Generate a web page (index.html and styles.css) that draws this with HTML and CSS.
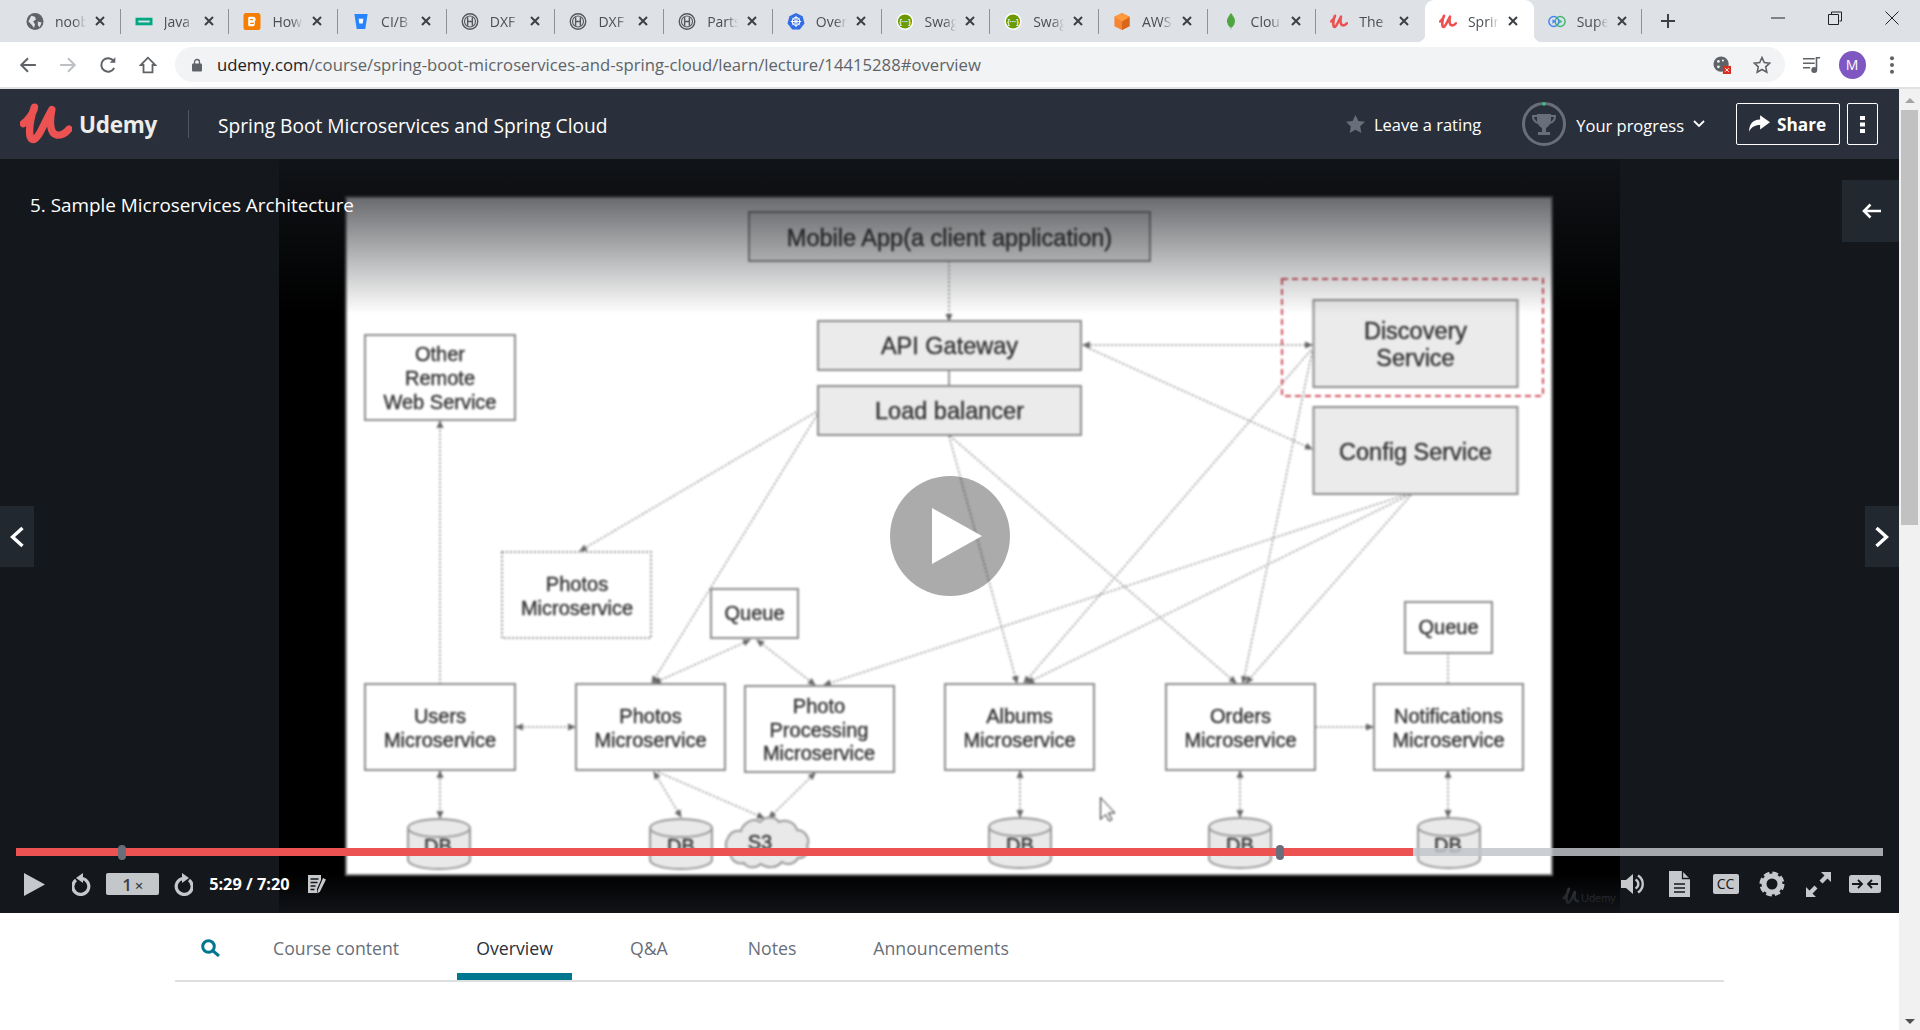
FILE: index.html
```html
<!DOCTYPE html>
<html lang="en">
<head>
    <meta charset="UTF-8">
    <meta name="viewport" content="width=device-width, initial-scale=1.0">
    <title>Spring Boot Microservices and Spring Cloud</title>
    <link rel="stylesheet" href="styles.css">
</head>
<body>

<svg class="icon-defs" aria-hidden="true">
    <defs>
        <symbol id="i-close" viewBox="0 0 12 12"><path d="M2 2l8 8M10 2l-8 8" fill="none" stroke="#3c4043" stroke-width="2"/></symbol>
        <symbol id="i-u" viewBox="30 20 155 130"><path d="M40 84C55 72 72 50 73 35C65 55 55 95 60 122C66 142 82 128 95 100C105 80 115 60 125 42C118 75 118 115 140 118C155 120 168 110 176 100" fill="none" stroke="#ec5252" stroke-width="22" stroke-linecap="round" stroke-linejoin="round"/></symbol>
        <symbol id="i-globe" viewBox="0 0 18 18"><circle cx="9" cy="9" r="9" fill="#5f6368"/><path d="M5 3l4 1 1 3-3 2 2 3-1 4-3-4-3-3zM12 9l4 1-2 5-2-2z" fill="#dee1e6"/></symbol>
        <symbol id="i-hp" viewBox="0 0 18 18"><rect x="0" y="5" width="18" height="8" fill="#01a982"/><rect x="3" y="8" width="12" height="2" fill="#dee1e6"/></symbol>
        <symbol id="i-blogger" viewBox="0 0 18 18"><rect width="18" height="18" rx="3" fill="#f57d00"/><path d="M6 4h4c2 0 3 1 3 4h-1v3c0 2-1 3-3 3H7c-2 0-2-1-2-3V6c0-1 0-2 1-2z" fill="#fff"/><path d="M7 7h3M7 11h4" stroke="#f57d00" stroke-width="1.4"/></symbol>
        <symbol id="i-bucket" viewBox="0 0 18 18"><path d="M2 1h14l-2.5 16h-9z" fill="#2684ff"/><path d="M6.5 6h5l-.7 5H7.200z" fill="#fff"/></symbol>
        <symbol id="i-ring" viewBox="0 0 18 18"><circle cx="9" cy="9" r="8.200" fill="none" stroke="#55585c" stroke-width="1.500"/><circle cx="9" cy="9" r="5.800" fill="none" stroke="#55585c" stroke-width="1.200"/><path d="M6.500 4.500v9M11.500 4.500v9M6.500 9h5" fill="none" stroke="#55585c" stroke-width="1.500"/></symbol>
        <symbol id="i-k8s" viewBox="0 0 18 18"><path d="M9 0l7 3.500 2 7.500-5 6.500H5L0 11l2-7.500z" fill="#326ce5"/><circle cx="9" cy="9" r="4" fill="none" stroke="#fff" stroke-width="1.300"/><path d="M9 3v12M3.500 9h11M5 5l8 8M13 5l-8 8" stroke="#fff"/></symbol>
        <symbol id="i-swagger" viewBox="0 0 18 18"><circle cx="9" cy="9" r="9" fill="#fff"/><circle cx="9" cy="9" r="7.500" fill="#6d9a00"/><text x="9" y="12" text-anchor="middle" class="swagger-text">{···}</text></symbol>
        <symbol id="i-cube" viewBox="0 0 18 18"><path d="M9 0l8 4v10l-8 4-8-4V4z" fill="#f58534"/><path d="M9 9l8-5v10l-8 4z" fill="#d9671b"/><path d="M9 0l8 4-8 5-8-5z" fill="#ff9a3c"/></symbol>
        <symbol id="i-leaf" viewBox="0 0 18 18"><path d="M9 0c3 4 5 7 4 10-.5 3-2.500 5-3.500 5l-.5 3-.5-3C7.500 15 5.500 13 5 10 4 7 6 4 9 0z" fill="#4fa53f"/></symbol>
        <symbol id="i-super" viewBox="0 0 20 18"><circle cx="6.500" cy="9" r="5.500" fill="none" stroke="#4285f4" stroke-width="1.600"/><circle cx="13.500" cy="9" r="5.500" fill="none" stroke="#3dba6e" stroke-width="1.600"/><path d="M5 6.500l4 2.500-4 2.500z" fill="#4285f4"/><path d="M12 6.500l4 2.500-4 2.500z" fill="#3dba6e"/></symbol>
        <marker id="arrow" viewBox="0 0 8 8" refX="7" refY="4" markerWidth="8" markerHeight="8" markerUnits="userSpaceOnUse" orient="auto-start-reverse"><path d="M0 0.500L8 4L0 7.500z" fill="#666"/></marker>
        <symbol id="i-db" viewBox="0 0 64 52" overflow="visible"><path d="M1 10v32c0 5 14 9 31 9s31-4 31-9V10" fill="#e9e9e9" stroke="#999" stroke-width="2"/><ellipse cx="32" cy="10" rx="31" ry="9" fill="#e9e9e9" stroke="#999" stroke-width="2"/></symbol>
    </defs>
</svg>

<div class="tabstrip">
    <div class="tab"><svg class="favicon"><use href="#i-globe"/></svg><span class="tab-title">noob</span><svg class="tab-close"><use href="#i-close"/></svg></div>
    <div class="tab"><svg class="favicon"><use href="#i-hp"/></svg><span class="tab-title">Java</span><svg class="tab-close"><use href="#i-close"/></svg></div>
    <div class="tab"><svg class="favicon"><use href="#i-blogger"/></svg><span class="tab-title">How</span><svg class="tab-close"><use href="#i-close"/></svg></div>
    <div class="tab"><svg class="favicon"><use href="#i-bucket"/></svg><span class="tab-title">CI/B</span><svg class="tab-close"><use href="#i-close"/></svg></div>
    <div class="tab"><svg class="favicon"><use href="#i-ring"/></svg><span class="tab-title">DXF</span><svg class="tab-close"><use href="#i-close"/></svg></div>
    <div class="tab"><svg class="favicon"><use href="#i-ring"/></svg><span class="tab-title">DXF</span><svg class="tab-close"><use href="#i-close"/></svg></div>
    <div class="tab"><svg class="favicon"><use href="#i-ring"/></svg><span class="tab-title">Parts</span><svg class="tab-close"><use href="#i-close"/></svg></div>
    <div class="tab"><svg class="favicon"><use href="#i-k8s"/></svg><span class="tab-title">Over</span><svg class="tab-close"><use href="#i-close"/></svg></div>
    <div class="tab"><svg class="favicon"><use href="#i-swagger"/></svg><span class="tab-title">Swag</span><svg class="tab-close"><use href="#i-close"/></svg></div>
    <div class="tab"><svg class="favicon"><use href="#i-swagger"/></svg><span class="tab-title">Swag</span><svg class="tab-close"><use href="#i-close"/></svg></div>
    <div class="tab"><svg class="favicon"><use href="#i-cube"/></svg><span class="tab-title">AWS</span><svg class="tab-close"><use href="#i-close"/></svg></div>
    <div class="tab"><svg class="favicon"><use href="#i-leaf"/></svg><span class="tab-title">Clou</span><svg class="tab-close"><use href="#i-close"/></svg></div>
    <div class="tab tab-before-active"><svg class="favicon"><use href="#i-u"/></svg><span class="tab-title">The</span><svg class="tab-close"><use href="#i-close"/></svg></div>
    <div class="tab tab-active"><svg class="favicon"><use href="#i-u"/></svg><span class="tab-title">Sprin</span><svg class="tab-close"><use href="#i-close"/></svg></div>
    <div class="tab"><svg class="favicon"><use href="#i-super"/></svg><span class="tab-title">Supe</span><svg class="tab-close"><use href="#i-close"/></svg></div>
    <div class="new-tab"><svg viewBox="0 0 14 14"><path d="M7 0v14M0 7h14" stroke="#3c4043" stroke-width="2"/></svg></div>
    <div class="window-controls">
        <div class="window-btn"><svg viewBox="0 0 14 14"><path d="M0 7h14" stroke="#222" stroke-width="1"/></svg></div>
        <div class="window-btn"><svg viewBox="0 0 14 14"><path d="M3.500 3V1h10v9h-2M.5 3.500h10v10H.5z" fill="none" stroke="#222"/></svg></div>
        <div class="window-btn"><svg viewBox="0 0 14 14"><path d="M.5.5l13 13M13.500.5l-13 13" stroke="#222"/></svg></div>
    </div>
</div>

<div class="toolbar">
    <div class="tool-btn"><svg viewBox="0 0 16 16"><path d="M15 8H2M8 2L2 8l6 6" fill="none" stroke="#5f6368" stroke-width="1.800"/></svg></div>
    <div class="tool-btn"><svg viewBox="0 0 16 16"><path d="M1 8h13M8 2l6 6-6 6" fill="none" stroke="#bdc1c6" stroke-width="1.800"/></svg></div>
    <div class="tool-btn"><svg viewBox="0 0 16 16"><path d="M13.500 10.500A6 6 0 1 1 13 4.500" fill="none" stroke="#5f6368" stroke-width="1.800"/><path d="M14.500 1v5h-5z" fill="#5f6368"/></svg></div>
    <div class="tool-btn"><svg viewBox="0 0 16 16"><path d="M8 1.500L1.500 8H4v6.500h8V8h2.500z" fill="none" stroke="#5f6368" stroke-width="1.600"/></svg></div>
    <div class="omnibox">
        <svg class="lock" viewBox="0 0 10 14"><path d="M2.500 6V4a2.500 2.500 0 0 1 5 0v2" fill="none" stroke="#5f6368" stroke-width="1.300"/><rect y="5.500" width="10" height="8" rx="1" fill="#5f6368"/></svg>
        <div class="url"><span class="url-host">udemy.com</span>/course/spring-boot-microservices-and-spring-cloud/learn/lecture/14415288#overview</div>
        <div class="tool-btn"><svg viewBox="0 0 20 20"><circle cx="9" cy="9" r="8.500" fill="#5f6368"/><circle cx="6" cy="6" r="1.500" fill="#f1f3f4"/><circle cx="11" cy="5" r="1.200" fill="#f1f3f4"/><circle cx="6" cy="12" r="1.500" fill="#f1f3f4"/><rect x="11" y="11" width="9" height="9" fill="#d93025"/><path d="M13.500 13.500l4 4M17.500 13.500l-4 4" stroke="#fff"/></svg></div>
        <div class="tool-btn"><svg viewBox="0 0 18 18"><path d="M9 1.500l2.300 5 5.400.6-4 3.700 1.100 5.400L9 13.500l-4.800 2.700 1.100-5.400-4-3.700 5.400-.6z" fill="none" stroke="#5f6368" stroke-width="1.600"/></svg></div>
    </div>
    <div class="tool-btn"><svg viewBox="0 0 20 18"><path d="M0 2h13M0 7h13M0 12h8" stroke="#5f6368" stroke-width="1.800"/><path d="M15 14V1h4" fill="none" stroke="#5f6368" stroke-width="1.800"/><circle cx="12.500" cy="14.500" r="3.300" fill="#5f6368"/></svg></div>
    <div class="tool-btn"><div class="avatar">M</div></div>
    <div class="tool-btn"><svg viewBox="0 0 4 16"><circle cx="2" cy="2" r="1.800" fill="#5f6368"/><circle cx="2" cy="8" r="1.800" fill="#5f6368"/><circle cx="2" cy="14" r="1.800" fill="#5f6368"/></svg></div>
</div>

<div class="page">
    <div class="content">

        <header class="course-header">
            <a class="brand">
                <svg class="brand-mark"><use href="#i-u"/></svg>
                <span class="brand-name">Udemy</span>
            </a>
            <h1 class="course-title">Spring Boot Microservices and Spring Cloud</h1>
            <div class="header-actions">
                <svg class="rating-star" viewBox="0 0 20 19"><path d="M10 0l3 6.300 7 .9-5.100 4.800 1.300 6.900L10 15.600 3.800 19l1.300-6.900L0 7.200l7-.9z" fill="#686f7a"/></svg>
                <span class="header-link">Leave a rating</span>
                <svg class="progress-ring" viewBox="0 0 44 44">
                    <circle cx="22" cy="22" r="20.500" fill="none" stroke="#686f7a" stroke-width="3"/>
                    <path d="M22 0.500v3" stroke="#2ecc8a" stroke-width="3"/>
                    <path d="M15 12h14v6c0 4-3 7-5 8v4h4v3H16v-3h4v-4c-2-1-5-4-5-8z" fill="#686f7a"/>
                    <path d="M15 14h-4c0 4 2 6 5 7M29 14h4c0 4-2 6-5 7" fill="none" stroke="#686f7a" stroke-width="2"/>
                </svg>
                <span class="header-link progress-label">Your progress</span>
                <svg class="chevron" viewBox="0 0 12 8"><path d="M1 1l5 5 5-5" fill="none" stroke="#fff" stroke-width="1.800"/></svg>
                <button class="share-btn" type="button">
                    <svg viewBox="0 0 20 16"><path d="M11 0l9 6.500-9 6.500V9C6 9 3 11 1 15 1 9 4 4 11 4z" fill="#fff"/></svg>
                    Share
                </button>
                <button class="more-btn" type="button">
                    <svg viewBox="0 0 5 17"><path d="M0 0h5v4H0zM0 6.500h5v4H0zM0 13h5v4H0z" fill="#fff"/></svg>
                </button>
            </div>
        </header>

        <section class="player">
            <!-- viewBox uses page coordinates so the slide can be read against the screen -->
            <svg class="slide" viewBox="279 159 1341 754">
                <g class="slide-picture">
                    <rect x="346" y="197" width="1206" height="678" fill="#fff" stroke="#777" stroke-width="2"/>

                    <g class="links">
                        <path d="M949 261V321" marker-end="url(#arrow)"/>
                        <path d="M1083 345H1312" marker-start="url(#arrow)" marker-end="url(#arrow)"/>
                        <path d="M1086 347L1312 449" marker-end="url(#arrow)"/>
                        <path d="M816 412L580 551" marker-end="url(#arrow)"/>
                        <path d="M817 415L652 683" marker-end="url(#arrow)"/>
                        <path d="M949 436L1017 683" marker-end="url(#arrow)"/>
                        <path d="M950 436L1236 683" marker-end="url(#arrow)"/>
                        <path d="M440 684V421" marker-end="url(#arrow)"/>
                        <path d="M1311 350L1024 683" marker-end="url(#arrow)"/>
                        <path d="M1312 352L1243 683" marker-end="url(#arrow)"/>
                        <path d="M1409 495L1027 683" marker-end="url(#arrow)"/>
                        <path d="M1405 495L824 685" marker-end="url(#arrow)"/>
                        <path d="M1411 495L1246 683" marker-end="url(#arrow)"/>
                        <path d="M654 683L750 640" marker-start="url(#arrow)" marker-end="url(#arrow)"/>
                        <path d="M815 685L757 640" marker-start="url(#arrow)" marker-end="url(#arrow)"/>
                        <path d="M516 727H575" marker-start="url(#arrow)" marker-end="url(#arrow)"/>
                        <path d="M440 771V818" marker-start="url(#arrow)" marker-end="url(#arrow)"/>
                        <path d="M654 772L681 817" marker-start="url(#arrow)" marker-end="url(#arrow)"/>
                        <path d="M658 772L764 818" marker-end="url(#arrow)"/>
                        <path d="M815 773L769 818" marker-start="url(#arrow)" marker-end="url(#arrow)"/>
                        <path d="M1020 771V817" marker-start="url(#arrow)" marker-end="url(#arrow)"/>
                        <path d="M1240 771V817" marker-start="url(#arrow)" marker-end="url(#arrow)"/>
                        <path d="M1316 727H1373" marker-end="url(#arrow)"/>
                        <path d="M1448 771V817" marker-start="url(#arrow)" marker-end="url(#arrow)"/>
                        <path d="M1448 653V684"/>
                    </g>
                    <path d="M949 370V386" class="link-solid"/>

                    <rect class="box-gray" x="749" y="212" width="401" height="49"/>
                    <rect class="box-gray" x="818" y="321" width="263" height="49"/>
                    <rect class="box-gray" x="818" y="386" width="263" height="49"/>
                    <rect class="box-gray" x="1313.500" y="300" width="204" height="87"/>
                    <rect class="box-gray" x="1313.500" y="407" width="204" height="87"/>
                    <rect class="box-red" x="1282" y="279" width="261" height="117"/>
                    <rect class="box" x="365" y="335" width="150" height="85"/>
                    <rect class="box-dotted" x="502" y="552" width="149" height="86"/>
                    <rect class="box" x="711" y="589" width="87" height="49"/>
                    <rect class="box" x="1405" y="602" width="87" height="51"/>
                    <rect class="box" x="365" y="684" width="150" height="86"/>
                    <rect class="box" x="576" y="684" width="149" height="86"/>
                    <rect class="box" x="745" y="686" width="149" height="86"/>
                    <rect class="box" x="945" y="684" width="149" height="86"/>
                    <rect class="box" x="1166" y="684" width="149" height="86"/>
                    <rect class="box" x="1374" y="684" width="149" height="86"/>

                    <use href="#i-db" x="407" y="818" width="64" height="52"/>
                    <use href="#i-db" x="649" y="818" width="64" height="52"/>
                    <use href="#i-db" x="988" y="817" width="64" height="52"/>
                    <use href="#i-db" x="1208" y="817" width="64" height="52"/>
                    <use href="#i-db" x="1417" y="817" width="64" height="52"/>
                    <path class="cloud" d="M728 838c2-6 8-8 13-7 2-8 12-14 19-9 5-6 15-6 19 0 7-3 16 0 18 8 8 0 14 9 10 16 3 6-3 13-9 12-3 6-11 8-16 4-5 6-15 7-21 2-6 5-14 4-17-1-7 2-13-3-13-8-5-3-7-12-3-17z"/>

                    <g class="labels-large">
                        <text x="949.500" y="246">Mobile App(a client application)</text>
                        <text x="949.500" y="354">API Gateway</text>
                        <text x="949.500" y="419">Load balancer</text>
                        <text x="1415.500" y="339">Discovery</text>
                        <text x="1415.500" y="366">Service</text>
                        <text x="1415.500" y="460">Config Service</text>
                    </g>
                    <g class="labels">
                        <text x="440" y="361">Other</text>
                        <text x="440" y="385">Remote</text>
                        <text x="440" y="409">Web Service</text>
                        <text x="577" y="591">Photos</text>
                        <text x="577" y="615">Microservice</text>
                        <text x="754.500" y="620">Queue</text>
                        <text x="1448.500" y="634">Queue</text>
                        <text x="440" y="723">Users</text>
                        <text x="440" y="747">Microservice</text>
                        <text x="650.500" y="723">Photos</text>
                        <text x="650.500" y="747">Microservice</text>
                        <text x="819" y="713">Photo</text>
                        <text x="819" y="737">Processing</text>
                        <text x="819" y="760">Microservice</text>
                        <text x="1019.500" y="723">Albums</text>
                        <text x="1019.500" y="747">Microservice</text>
                        <text x="1240.500" y="723">Orders</text>
                        <text x="1240.500" y="747">Microservice</text>
                        <text x="1448.500" y="723">Notifications</text>
                        <text x="1448.500" y="747">Microservice</text>
                        <text x="438" y="853">DB</text>
                        <text x="681" y="853">DB</text>
                        <text x="1020" y="852">DB</text>
                        <text x="1240" y="852">DB</text>
                        <text x="1448" y="852">DB</text>
                        <text x="760" y="849">S3</text>
                    </g>
                    <path class="mouse" d="M1100.500 797.500v22l5-5 3.500 6.500 3-1.500-3.500-6.500h6.500z"/>
                </g>
                <g class="watermark">
                    <path d="M1563 899c3-3 6-7 6-11-2 5-3 11-2 14 2 3 5-3 8-11-1 6-1 11 4 10" fill="none" stroke="#3a3d40" stroke-width="2.500"/>
                    <text x="1581" y="902">Udemy</text>
                </g>
            </svg>

            <div class="shade-top"></div>
            <div class="shade-bottom"></div>

            <div class="lecture-title">5. Sample Microservices Architecture</div>

            <div class="side-btn side-prev"><svg viewBox="0 0 14 22"><path d="M12.500 2L2.500 11l10 9" fill="none" stroke="#fff" stroke-width="3.400"/></svg></div>
            <div class="side-btn side-next"><svg viewBox="0 0 14 22"><path d="M1.500 2l10 9-10 9" fill="none" stroke="#fff" stroke-width="3.400"/></svg></div>
            <div class="sidebar-toggle"><svg viewBox="0 0 20 16"><path d="M20 8H3M9.500 1.500L3 8l6.500 6.500" fill="none" stroke="#fff" stroke-width="2.600"/></svg></div>

            <div class="big-play"><svg viewBox="0 0 50 56"><path d="M0 0L50 28L0 56z" fill="#fff"/></svg></div>

            <div class="controls">
                <div class="seek">
                    <div class="seek-played"></div>
                    <div class="seek-mark seek-mark-a"></div>
                    <div class="seek-mark seek-mark-b"></div>
                </div>
                <div class="control-row">
                    <div class="ctl"><svg class="ctl-play" viewBox="0 0 21 23"><path d="M0 0L21 11.500L0 23z"/></svg></div>
                    <div class="ctl"><svg class="ctl-seek" viewBox="0 0 20 23"><path d="M4 7a8 8 0 1 0 6-1.500" fill="none" stroke-width="3.200"/><path d="M11 0v10L4 5z" class="filled"/></svg></div>
                    <div class="speed">1<small>×</small></div>
                    <div class="ctl"><svg class="ctl-seek" viewBox="0 0 20 23"><path d="M16 7a8 8 0 1 1-6-1.500" fill="none" stroke-width="3.200"/><path d="M9 0v10l7-5z" class="filled"/></svg></div>
                    <div class="time">5:29 / 7:20</div>
                    <svg class="ctl-note" viewBox="0 0 20 20"><path d="M1 1h13v5l-4 9v4H1z" class="filled"/><path d="M3.500 5h8M3.500 8.500h7M3.500 12h5M3.500 15.500h4" stroke="#14171c" stroke-width="1.400"/><path d="M16 4l3 1.500-6 12-2.500 2 .2-3z" class="filled"/></svg>
                    <div class="control-spacer"></div>
                    <div class="ctl"><svg class="ctl-volume" viewBox="0 0 24 22"><path d="M0 7h5l7-6v20l-7-6H0z" class="filled"/><path d="M14.500 6.500a5 5 0 0 1 0 9M17 2.500a10 10 0 0 1 0 17" fill="none" stroke-width="2.400"/></svg></div>
                    <div class="ctl"><svg class="ctl-file" viewBox="0 0 22 26"><path d="M1 0h13l8 8v18H1z" class="filled"/><path d="M14.500 0v7.500H22" fill="none" stroke="#14171c" stroke-width="1.300"/><path d="M6 13h11M6 17h11M6 21h11" stroke="#14171c" stroke-width="1.500"/></svg></div>
                    <div class="ctl"><div class="cc">CC</div></div>
                    <div class="ctl"><svg class="ctl-gear" viewBox="0 0 26 26"><circle cx="13" cy="13" r="8" fill="none" stroke-width="5"/><circle cx="13" cy="13" r="10.500" fill="none" stroke-width="4" stroke-dasharray="5.500 2.750"/></svg></div>
                    <div class="ctl"><svg class="ctl-expand" viewBox="0 0 27 27"><path d="M16 1h10v10l-3.500-3.500-5 5-3-3 5-5zM1 16v10h10l-3.500-3.500 5-5-3-3-5 5z" class="filled"/></svg></div>
                    <div class="ctl"><svg class="ctl-theatre" viewBox="0 0 32 18"><rect width="32" height="18" rx="2.500" class="filled"/><path d="M3 9h10M9 5l4 4-4 4M29 9H19M23 5l-4 4 4 4" fill="none" stroke="#14171c" stroke-width="1.800"/></svg></div>
                </div>
            </div>
        </section>

        <nav class="course-nav">
            <svg class="nav-search" viewBox="0 0 19 18"><circle cx="7.500" cy="7.500" r="5.800" fill="none" stroke="#007791" stroke-width="3"/><path d="M11.500 11.500L18 17" stroke="#007791" stroke-width="3"/></svg>
            <a class="nav-item">Course content</a>
            <a class="nav-item nav-item-active">Overview</a>
            <a class="nav-item nav-item-qa">Q&amp;A</a>
            <a class="nav-item">Notes</a>
            <a class="nav-item">Announcements</a>
        </nav>

    </div>

    <div class="scrollbar">
        <div class="scroll-arrow scroll-up"></div>
        <div class="scroll-thumb"></div>
        <div class="scroll-arrow scroll-down"></div>
    </div>
</div>

</body>
</html>
```

FILE: styles.css
```css
* {
    box-sizing: border-box;
}

html, body {
    height: 100%;
}

body {
    margin: 0;
    display: flex;
    flex-direction: column;
    overflow: hidden;
    background-color: #fff;
    font-family: "Open Sans", Arial, sans-serif;
}

svg {
    display: block;
}

.icon-defs {
    position: absolute;
    width: 0;
    height: 0;
}

.swagger-text {
    font-family: "Liberation Sans", sans-serif;
    font-size: 7px;
    font-weight: bold;
    fill: #fff;
}

/* browser chrome */

.tabstrip {
    display: flex;
    height: 42px;
    padding-left: 12px;
    background-color: #dee1e6;
}

.tab {
    position: relative;
    flex: 0 0 108.7px;
    display: flex;
    align-items: center;
    padding-left: 14px;
}

.tab::after {
    content: "";
    position: absolute;
    right: 0;
    top: 9px;
    height: 25px;
    width: 1px;
    background-color: #8e9196;
}

.tab-before-active::after, .tab-active::after {
    display: none;
}

.tab-active {
    background-color: #fff;
    border-radius: 9px 9px 0 0;
}

.tab-active::before {
    content: "";
    position: absolute;
    left: -8px;
    right: -8px;
    bottom: 0;
    height: 8px;
    background:
        radial-gradient(circle at 0 0, #dee1e6 8px, #fff 8.5px) left / 8px 8px no-repeat,
        radial-gradient(circle at 100% 0, #dee1e6 8px, #fff 8.5px) right / 8px 8px no-repeat;
}

.favicon {
    flex: none;
    width: 18px;
    height: 17px;
    margin-right: 11px;
}

.tab-title {
    flex: none;
    width: 38px;
    font-size: 14px;
    color: #4b4e52;
    white-space: nowrap;
    -webkit-mask-image: linear-gradient(to right, #000 50%, transparent 82%);
    mask-image: linear-gradient(to right, #000 50%, transparent 82%);
}

.tab-close {
    flex: none;
    width: 12px;
    height: 12px;
    margin-left: 1px;
}

.new-tab {
    flex: none;
    width: 51px;
    display: flex;
    align-items: center;
    justify-content: center;
}

.new-tab svg {
    width: 14px;
    height: 14px;
}

.window-controls {
    display: flex;
    margin-left: auto;
    height: 36px;
}

.window-btn {
    width: 57px;
    display: flex;
    align-items: center;
    justify-content: center;
}

.window-btn svg {
    width: 14px;
    height: 14px;
}

.toolbar {
    display: flex;
    align-items: center;
    height: 47px;
    padding: 0 8px;
    background-color: #fff;
    border-bottom: 2px solid #dfe1e5;
}

.tool-btn {
    flex: none;
    width: 40px;
    height: 36px;
    display: flex;
    align-items: center;
    justify-content: center;
}

.tool-btn svg {
    width: 18px;
    height: 18px;
}

.omnibox {
    flex: 1;
    display: flex;
    align-items: center;
    height: 35px;
    margin: 0 7px;
    padding: 0 3px 0 17px;
    border-radius: 18px;
    background-color: #f1f3f4;
}

.lock {
    flex: none;
    width: 10px !important;
    height: 14px;
    margin-right: 15px;
}

.url {
    flex: 1;
    font-size: 16.7px;
    color: #5f6368;
    white-space: nowrap;
}

.url-host {
    color: #202124;
}

.avatar {
    width: 27px;
    height: 28px;
    border-radius: 50%;
    background-color: #7e57c2;
    color: #fff;
    font-size: 14px;
    line-height: 28px;
    text-align: center;
}

/* page */

.page {
    flex: 1;
    display: flex;
    min-height: 0;
}

.content {
    flex: 1;
    min-width: 0;
    display: flex;
    flex-direction: column;
}

.course-header {
    flex: none;
    height: 70px;
    display: flex;
    align-items: center;
    padding: 0 21px 0 20px;
    background-color: #29303b;
    color: #fff;
}

.brand {
    display: flex;
    align-items: center;
    padding-right: 31px;
    border-right: 1px solid #4f555e;
    height: 28px;
}

.brand-mark {
    width: 52px;
    height: 44px;
    margin-right: 7px;
    flex: none;
}

.brand-name {
    font-size: 22.5px;
    font-weight: 700;
    color: #ececea;
    letter-spacing: -0.3px;
}

.course-title {
    margin: 2px 0 0 29px;
    font-size: 19.2px;
    font-weight: 400;
}

.header-actions {
    display: flex;
    align-items: center;
    margin-left: auto;
}

.rating-star {
    width: 19px;
    height: 18px;
    margin-right: 9px;
}

.header-link {
    font-size: 16.5px;
}

.progress-ring {
    width: 44px;
    height: 44px;
    margin: 0 10px 0 41px;
}

.progress-label {
    margin-top: 2px;
}

.chevron {
    width: 12px;
    height: 8px;
    margin: 0 31px 0 9px;
}

.share-btn {
    display: flex;
    align-items: center;
    gap: 7px;
    width: 104px;
    height: 42px;
    padding: 0 0 0 11px;
    border: 1px solid #fff;
    border-radius: 2px;
    background: none;
    color: #fff;
    font-family: inherit;
    font-size: 17.2px;
    font-weight: 700;
}

.share-btn svg {
    width: 22px;
    height: 18px;
}

.more-btn {
    display: flex;
    align-items: center;
    justify-content: center;
    width: 31px;
    height: 42px;
    margin-left: 7px;
    padding: 0;
    border: 1px solid #fff;
    border-radius: 2px;
    background: none;
}

.more-btn svg {
    width: 5px;
    height: 17px;
}

/* video player */

.player {
    position: relative;
    flex: none;
    height: 754px;
    display: flex;
    justify-content: center;
    overflow: hidden;
    background-color: #14171c;
}

.slide {
    width: 1341px;
    height: 754px;
    background-color: #000;
}

.slide-picture {
    filter: blur(1px);
}

.links path {
    fill: none;
    stroke: #8a8a8a;
    stroke-width: 1.500;
    stroke-dasharray: 2 2;
}

.link-solid {
    stroke: #999;
    stroke-width: 2;
}

.box, .box-gray, .box-dotted, .box-red {
    stroke: #8e8e8e;
    stroke-width: 2;
    fill: #fff;
}

.box-gray {
    fill: #ebebeb;
}

.box-dotted {
    stroke-dasharray: 2 2;
    stroke: #999;
    fill: none;
}

.box-red {
    stroke: #d0505e;
    stroke-dasharray: 6 4;
    fill: none;
}

.cloud {
    fill: #e9e9e9;
    stroke: #999;
    stroke-width: 2;
}

.mouse {
    fill: #fff;
    stroke: #222;
    stroke-width: 1;
}

.labels, .labels-large {
    font-family: "Liberation Sans", Arial, sans-serif;
    fill: #333;
    stroke: #333;
    stroke-width: 0.4;
    text-anchor: middle;
}

.labels {
    font-size: 20px;
}

.labels-large {
    font-size: 23.5px;
}

.watermark text {
    font-family: "Liberation Sans", sans-serif;
    font-size: 11px;
    fill: #3a3d40;
}

.shade-top {
    position: absolute;
    top: 0;
    left: 0;
    right: 0;
    height: 155px;
    background: linear-gradient(to bottom, rgba(20, 23, 28, 0.85), rgba(20, 23, 28, 0));
}

.shade-bottom {
    position: absolute;
    left: 0;
    right: 0;
    bottom: 0;
    height: 40px;
    background: linear-gradient(to top, rgba(20, 23, 28, 0.85), rgba(20, 23, 28, 0));
}

.lecture-title {
    position: absolute;
    left: 30px;
    top: 34px;
    font-size: 18.9px;
    line-height: 24px;
    color: #fff;
}

.side-btn, .sidebar-toggle {
    position: absolute;
    display: flex;
    align-items: center;
    justify-content: center;
    background-color: #212830;
}

.side-btn {
    top: 347px;
    width: 34px;
    height: 61px;
}

.side-btn svg {
    width: 14px;
    height: 22px;
}

.side-prev {
    left: 0;
}

.side-next {
    right: 0;
}

.sidebar-toggle {
    top: 21px;
    right: 0;
    width: 57px;
    height: 62px;
}

.sidebar-toggle svg {
    width: 20px;
    height: 16px;
}

.big-play {
    position: absolute;
    left: 890px;
    top: 317px;
    width: 120px;
    height: 120px;
    display: flex;
    align-items: center;
    justify-content: center;
    padding-left: 14px;
    border-radius: 50%;
    background-color: rgba(0, 0, 0, 0.33);
}

.big-play svg {
    width: 50px;
    height: 56px;
}

.controls {
    position: absolute;
    left: 0;
    right: 0;
    bottom: 0;
    height: 65px;
}

.seek {
    position: relative;
    height: 8px;
    margin: 0 16px;
    background-color: rgba(193, 197, 201, 0.84);
}

.seek-played {
    height: 100%;
    width: 1397px;
    background-color: #ec5252;
}

.seek-mark {
    position: absolute;
    top: -3px;
    width: 8px;
    height: 15px;
    border-radius: 4px;
    background-color: #686f7a;
}

.seek-mark-a {
    left: 102px;
}

.seek-mark-b {
    left: 1260px;
}

.control-row {
    display: flex;
    align-items: center;
    height: 24px;
    margin-top: 16px;
    padding: 0 11px 0 11.500px;
    color: #c6c8cb;
    fill: #c6c8cb;
    stroke: #c6c8cb;
}

.control-row .filled {
    fill: #c6c8cb;
    stroke: none;
}

.ctl {
    flex: none;
    width: 46.400px;
    display: flex;
    justify-content: center;
}

.ctl-play {
    width: 21px;
    height: 23px;
    stroke: none;
}

.ctl-seek {
    width: 20px;
    height: 23px;
    margin-left: 1px;
}

.speed {
    flex: none;
    width: 53px;
    height: 22px;
    margin-left: 2px;
    border-radius: 2px;
    background-color: #c4c7ca;
    color: #3c3f42;
    font-size: 17px;
    font-weight: 600;
    line-height: 23px;
    text-align: center;
}

.speed small {
    margin-left: 3px;
    font-size: 15px;
}

.time {
    flex: none;
    width: 84px;
    margin-left: 3.500px;
    color: #fff;
    font-size: 16.300px;
    font-weight: 700;
    white-space: nowrap;
}

.ctl-note {
    width: 20px;
    height: 20px;
    margin-left: 14px;
    stroke: none;
}

.control-spacer {
    flex: 1;
}

.ctl-volume {
    width: 24px;
    height: 22px;
}

.ctl-file {
    width: 22px;
    height: 26px;
    stroke: none;
}

.cc {
    width: 26px;
    height: 20px;
    border-radius: 2px;
    background-color: #c6c8cb;
    color: #14171c;
    font-size: 14px;
    line-height: 20px;
    text-align: center;
}

.ctl-gear {
    width: 26px;
    height: 26px;
}

.ctl-expand {
    width: 27px;
    height: 27px;
}

.ctl-theatre {
    width: 32px;
    height: 18px;
}

/* lecture tabs */

.course-nav {
    flex: none;
    display: flex;
    align-items: stretch;
    gap: 39px;
    width: 1549px;
    height: 69px;
    margin-left: 175px;
    padding-left: 26px;
    border-bottom: 2px solid #dedfe0;
}

.nav-search {
    align-self: center;
    width: 19px;
    height: 18px;
    margin: 2px -5px 0 0;
}

.nav-item {
    display: flex;
    align-items: center;
    padding: 10px 19px 0;
    border-bottom: 7px solid transparent;
    font-size: 17.7px;
    color: #686f7a;
}

.nav-item-active {
    border-bottom-color: #007791;
    color: #29303b;
}

.nav-item-qa {
    padding-right: 22px;
}

/* fake page scrollbar */

.scrollbar {
    flex: none;
    width: 21px;
    display: flex;
    flex-direction: column;
    align-items: center;
    justify-content: space-between;
    padding-top: 9px;
    padding-bottom: 6px;
    background-color: #f1f1f1;
}

.scroll-arrow {
    flex: none;
    width: 0;
    height: 0;
    border-left: 5px solid transparent;
    border-right: 5px solid transparent;
}

.scroll-up {
    border-bottom: 5px solid #a3a3a3;
}

.scroll-down {
    border-top: 5px solid #505050;
}

.scroll-thumb {
    width: 17px;
    height: 415px;
    margin: 7px 0 auto;
    background-color: #c1c1c1;
}
```
